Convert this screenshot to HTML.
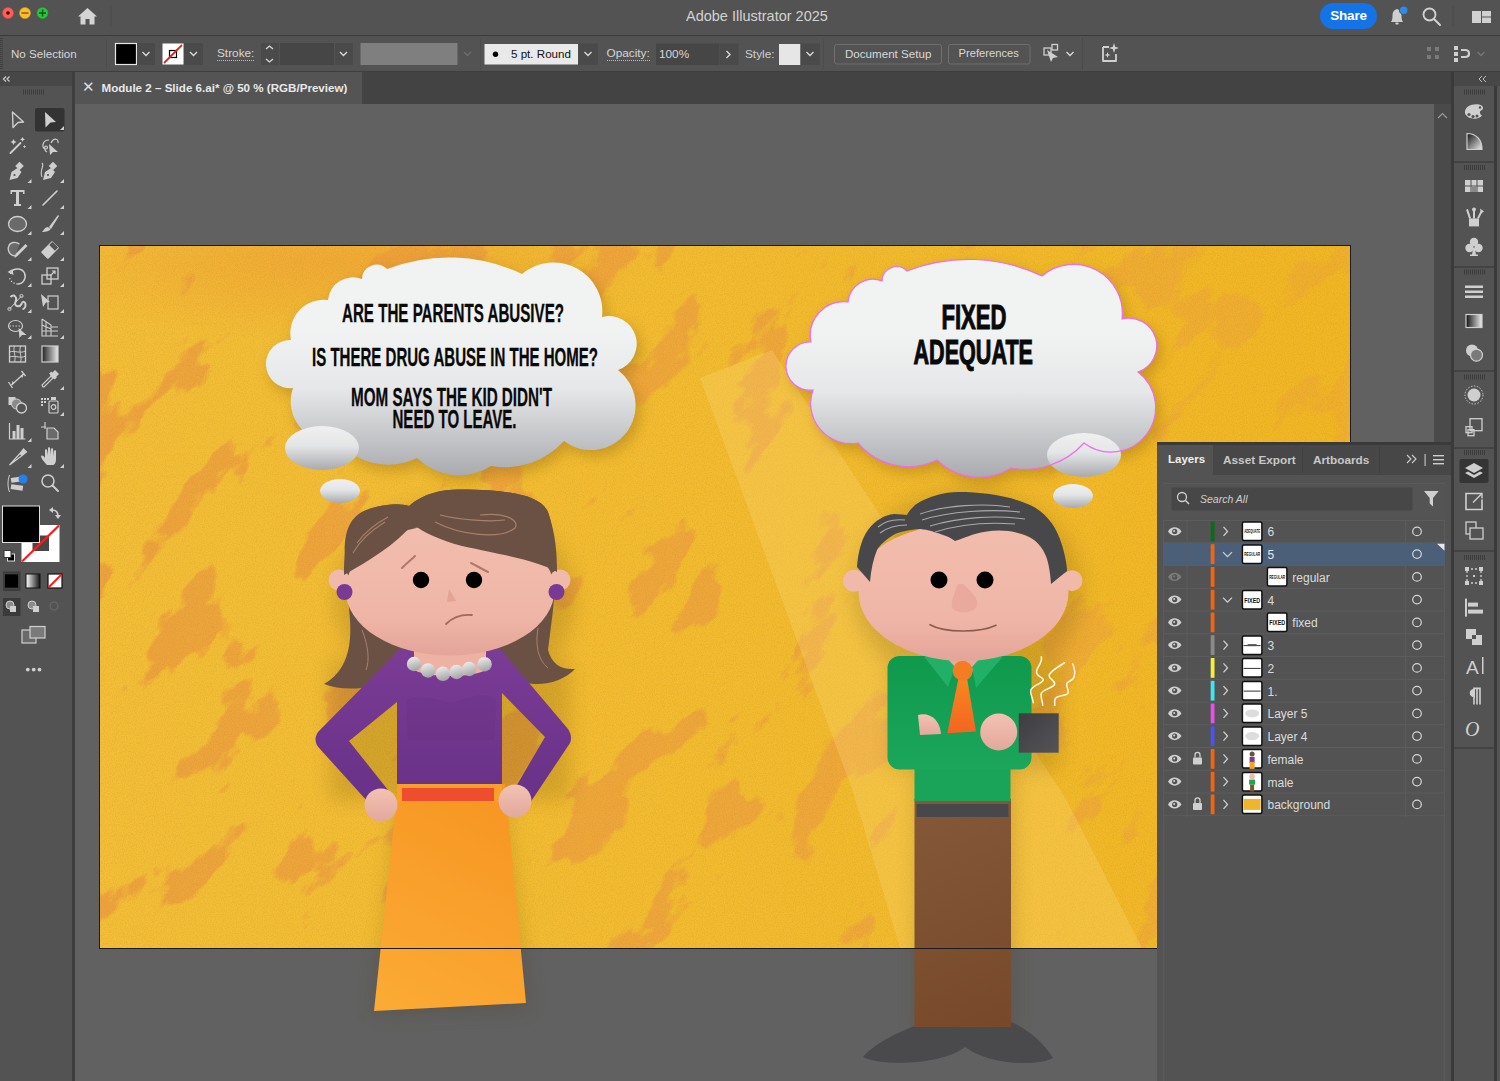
<!DOCTYPE html>
<html><head><meta charset="utf-8">
<style>
*{margin:0;padding:0;box-sizing:border-box}
html,body{width:1500px;height:1081px;overflow:hidden;background:#535353;font-family:"Liberation Sans",sans-serif;color:#d6d6d6}
.a{position:absolute}
#title{left:0;top:0;width:1500px;height:35px;background:#535353}
#titleline{left:0;top:35px;width:1500px;height:1px;background:#3b3b3b}
#ctrl{left:0;top:36px;width:1500px;height:36px;background:#535353}
#ctrlline{left:0;top:71px;width:1500px;height:1px;background:#3e3e3e}
#canvas{left:74px;top:104px;width:1360px;height:977px;background:#616161;overflow:hidden}
#tabbar{left:74px;top:72px;width:1377px;height:32px;background:#434343}
#lefttb{left:0;top:72px;width:72px;height:1009px;background:#535353}
#leftsep{left:72px;top:72px;width:2px;height:1009px;background:#3e3e3e}

</style></head><body>
<div class="a" id="title"></div>
<div class="a" id="titleline"></div>
<div class="a" id="ctrl"></div>
<div class="a" id="ctrlline"></div>
<div class="a" id="tabbar"></div>
<div class="a" id="canvas"></div>
<svg class="a" style="left:0;top:0" width="1500" height="1081" viewBox="0 0 1500 1081">
<defs>
  <clipPath id="cv"><rect x="74" y="104" width="1360" height="977"/></clipPath>
  <clipPath id="ab"><rect x="100" y="246" width="1250" height="702"/></clipPath>
  <linearGradient id="cloudg" gradientUnits="userSpaceOnUse" x1="0" y1="330" x2="0" y2="478">
    <stop offset="0" stop-color="#f1f2f2"/>
    <stop offset="0.4" stop-color="#e6e7e8"/>
    <stop offset="1" stop-color="#a8a9ad"/>
  </linearGradient>
  <linearGradient id="bubg" x1="0" y1="0" x2="0" y2="1">
    <stop offset="0" stop-color="#f0f0f0"/>
    <stop offset="0.45" stop-color="#e4e5e6"/>
    <stop offset="1" stop-color="#a9aaae"/>
  </linearGradient>
  <linearGradient id="faceg" x1="0" y1="0" x2="0" y2="1">
    <stop offset="0" stop-color="#f2bdae"/>
    <stop offset="0.7" stop-color="#efb6a7"/>
    <stop offset="1" stop-color="#e4a499"/>
  </linearGradient>
  <linearGradient id="handg" x1="0" y1="0" x2="0" y2="1">
    <stop offset="0" stop-color="#f3c2b3"/>
    <stop offset="1" stop-color="#e2a89c"/>
  </linearGradient>
  <linearGradient id="sweatg" gradientUnits="userSpaceOnUse" x1="0" y1="650" x2="0" y2="785">
    <stop offset="0" stop-color="#7b3c96"/>
    <stop offset="1" stop-color="#6a3288"/>
  </linearGradient>
  <linearGradient id="skirtg" gradientUnits="userSpaceOnUse" x1="500" y1="785" x2="380" y2="1010">
    <stop offset="0" stop-color="#f79522"/>
    <stop offset="1" stop-color="#fbab35"/>
  </linearGradient>
  <linearGradient id="pantg" gradientUnits="userSpaceOnUse" x1="915" y1="800" x2="1010" y2="1027">
    <stop offset="0" stop-color="#85583a"/>
    <stop offset="1" stop-color="#77492a"/>
  </linearGradient>
  <linearGradient id="shirtg" x1="0" y1="0" x2="0" y2="1">
    <stop offset="0" stop-color="#0e994d"/>
    <stop offset="1" stop-color="#1ba65c"/>
  </linearGradient>
  <linearGradient id="pearlg" x1="0" y1="0" x2="0.3" y2="1">
    <stop offset="0" stop-color="#f4f4f4"/>
    <stop offset="1" stop-color="#a8a8aa"/>
  </linearGradient>
  <filter id="blot" x="0" y="0" width="100%" height="100%" color-interpolation-filters="sRGB">
    <feTurbulence type="fractalNoise" baseFrequency="0.018 0.009" numOctaves="5" seed="9" result="n"/>
    <feColorMatrix in="n" type="matrix" values="0 0 0 0 0.93  0 0 0 0 0.64  0 0 0 0 0.24  -18 0 0 0 7.1" result="c"/>
  </filter>
  <linearGradient id="lmg" gradientUnits="userSpaceOnUse" x1="100" y1="0" x2="1350" y2="0">
    <stop offset="0" stop-color="#fff" stop-opacity="1"/><stop offset="0.55" stop-color="#fff" stop-opacity="0.85"/><stop offset="1" stop-color="#fff" stop-opacity="0.35"/>
  </linearGradient>
  <mask id="lmask" maskUnits="userSpaceOnUse" x="100" y="246" width="1250" height="702"><rect x="100" y="246" width="1250" height="702" fill="url(#lmg)"/></mask>
  <radialGradient id="tl" gradientUnits="userSpaceOnUse" cx="330" cy="262" r="320" gradientTransform="translate(0 196.5) scale(1 0.25)">
    <stop offset="0" stop-color="#ee9a35" stop-opacity="0.55"/><stop offset="1" stop-color="#ee9a35" stop-opacity="0"/>
  </radialGradient>
  <linearGradient id="tieg" x1="0" y1="0" x2="0" y2="1"><stop offset="0" stop-color="#f7881f"/><stop offset="1" stop-color="#f26522"/></linearGradient>
  <linearGradient id="cupg" x1="0" y1="0" x2="1" y2="1"><stop offset="0" stop-color="#3e3e41"/><stop offset="1" stop-color="#545458"/></linearGradient>
  <filter id="grain" x="0" y="0" width="100%" height="100%" color-interpolation-filters="sRGB">
    <feTurbulence type="fractalNoise" baseFrequency="0.9" numOctaves="2" seed="3" result="g"/>
    <feColorMatrix in="g" type="matrix" values="0 0 0 0 0.6  0 0 0 0 0.45  0 0 0 0 0.05  -4 0 0 0 2.3"/>
  </filter>
  <linearGradient id="basey" gradientUnits="userSpaceOnUse" x1="100" y1="0" x2="1350" y2="0">
    <stop offset="0" stop-color="#f3be38"/><stop offset="0.5" stop-color="#f2bb30"/><stop offset="1" stop-color="#f1b624"/>
  </linearGradient>
  <filter id="soft" x="-20%" y="-20%" width="140%" height="140%"><feGaussianBlur stdDeviation="7"/></filter>
  <filter id="soft2" x="-30%" y="-10%" width="160%" height="120%"><feGaussianBlur stdDeviation="10"/></filter>
</defs>
<g clip-path="url(#cv)">
  <rect x="99" y="245" width="1252" height="704" fill="#1c1c28"/>
  <g clip-path="url(#ab)">
    <rect x="100" y="246" width="1250" height="702" fill="url(#basey)"/>
    <g mask="url(#lmask)">
      <g transform="rotate(38 700 600)">
        <rect x="-100" y="-200" width="1600" height="1600" filter="url(#blot)"/>
      </g>
    </g>
    <rect x="100" y="246" width="1250" height="702" fill="url(#tl)"/>
    <rect x="100" y="246" width="1250" height="702" filter="url(#grain)" opacity="0.09"/>
    <path d="M700 378 L772 350 L1066 799 L1142 948 L900 948 L853 792 Z" fill="#ffe189" opacity="0.24"/>
    <path d="M291.0 340.0 A33.5 33.5 0 0 1 328.0 300.0 A25.0 25.0 0 0 1 362.0 279.0 A14.6 14.6 0 0 1 387.0 269.0 A169.9 169.9 0 0 1 522.0 274.0 A48.8 48.8 0 0 1 602.0 317.0 A27.7 27.7 0 0 1 618.0 370.0 A44.6 44.6 0 0 1 564.0 441.0 A79.4 79.4 0 0 1 491.0 466.0 A59.8 59.8 0 0 1 417.0 458.0 A65.3 65.3 0 0 1 338.0 441.0 A40.2 40.2 0 0 1 293.0 388.0 A24.1 24.1 0 1 1 291.0 340.0Z" fill="#7a5a10" opacity="0.35" filter="url(#soft)" transform="translate(4,6)"/>
    <path d="M291.0 340.0 A33.5 33.5 0 0 1 328.0 300.0 A25.0 25.0 0 0 1 362.0 279.0 A14.6 14.6 0 0 1 387.0 269.0 A169.9 169.9 0 0 1 522.0 274.0 A48.8 48.8 0 0 1 602.0 317.0 A27.7 27.7 0 0 1 618.0 370.0 A44.6 44.6 0 0 1 564.0 441.0 A79.4 79.4 0 0 1 491.0 466.0 A59.8 59.8 0 0 1 417.0 458.0 A65.3 65.3 0 0 1 338.0 441.0 A40.2 40.2 0 0 1 293.0 388.0 A24.1 24.1 0 1 1 291.0 340.0Z" fill="#7a5a10" opacity="0.35" filter="url(#soft)" transform="translate(524,8)"/>
  </g>
  <!-- character shadows -->
  <g opacity="0.16" filter="url(#soft2)" fill="#3a2a00">
    <ellipse cx="455" cy="600" rx="120" ry="100"/>
    <rect x="330" y="660" width="240" height="140"/>
    <path d="M398 790 L505 790 L530 1010 L372 1015Z"/>
    <ellipse cx="968" cy="590" rx="115" ry="100"/>
    <rect x="890" y="660" width="170" height="110"/>
    <rect x="915" y="770" width="100" height="260"/>
  </g>

  <!-- clouds -->
  <path d="M291.0 340.0 A33.5 33.5 0 0 1 328.0 300.0 A25.0 25.0 0 0 1 362.0 279.0 A14.6 14.6 0 0 1 387.0 269.0 A169.9 169.9 0 0 1 522.0 274.0 A48.8 48.8 0 0 1 602.0 317.0 A27.7 27.7 0 0 1 618.0 370.0 A44.6 44.6 0 0 1 564.0 441.0 A79.4 79.4 0 0 1 491.0 466.0 A59.8 59.8 0 0 1 417.0 458.0 A65.3 65.3 0 0 1 338.0 441.0 A40.2 40.2 0 0 1 293.0 388.0 A24.1 24.1 0 1 1 291.0 340.0Z" fill="url(#cloudg)"/>
  <ellipse cx="322" cy="448" rx="37" ry="22" fill="url(#bubg)"/>
  <ellipse cx="340" cy="491" rx="20" ry="12" fill="url(#bubg)"/>
  <path d="M291.0 340.0 A33.5 33.5 0 0 1 328.0 300.0 A25.0 25.0 0 0 1 362.0 279.0 A14.6 14.6 0 0 1 387.0 269.0 A169.9 169.9 0 0 1 522.0 274.0 A48.8 48.8 0 0 1 602.0 317.0 A27.7 27.7 0 0 1 618.0 370.0 A44.6 44.6 0 0 1 564.0 441.0 A79.4 79.4 0 0 1 491.0 466.0 A59.8 59.8 0 0 1 417.0 458.0 A65.3 65.3 0 0 1 338.0 441.0 A40.2 40.2 0 0 1 293.0 388.0 A24.1 24.1 0 1 1 291.0 340.0Z" fill="url(#cloudg)" transform="translate(520,2)"/>
  <ellipse cx="1084" cy="455" rx="37" ry="22" fill="url(#bubg)"/>
  <ellipse cx="1073" cy="496" rx="20" ry="12" fill="url(#bubg)"/>

  <!-- ===== WOMAN ===== -->
  <!-- back hair -->
  <path d="M324 684 C345 672 352 650 350 620 L345 560 C343 530 350 512 376 507 C392 503 402 504 409 506 C425 492 445 489 462 489.5 C510 490 540 495 548 512 C556 535 557 570 553 610 L548 650 C552 665 562 670 575 669 C560 685 530 690 505 675 L395 675 C375 690 345 692 324 684Z" fill="#6b5143"/>
  <!-- arms -->
  <path d="M397 652 L318 732 C314 738 315 744 320 749 L368 802 L388 790 L349 741 L397 702Z" fill="url(#sweatg)"/>
  <path d="M502 651 L568 729 C572 735 572 741 568 746 L530 803 L514 790 L545 737 L502 693Z" fill="url(#sweatg)"/>
  <!-- torso -->
  <rect x="397" y="650" width="105" height="135" fill="url(#sweatg)"/>
  <path d="M406 700 C425 692 445 705 455 702 C470 697 485 690 496 700 L494 740 L408 740Z" fill="#5f2d7c" opacity="0.18"/>
  <!-- skirt -->
  <path d="M398 784 L505 784 L526 1003 L374 1011Z" fill="url(#skirtg)"/>
  <rect x="397" y="784" width="105" height="18" fill="#f7a02a"/>
  <rect x="402" y="788" width="92" height="13" fill="#ee4d2e"/>
  <!-- hands -->
  <circle cx="381" cy="805" r="16.5" fill="url(#handg)"/>
  <circle cx="515" cy="801" r="16.5" fill="url(#handg)"/>
  <!-- neck -->
  <path d="M414 645 L486 645 L486 670 C470 678 430 678 414 670Z" fill="#eeb2a3"/>
  <!-- ears -->
  <circle cx="339" cy="580" r="10.5" fill="#f0b9aa"/>
  <circle cx="560" cy="580" r="10.5" fill="#f0b9aa"/>
  <!-- face -->
  <ellipse cx="450" cy="590" rx="104.5" ry="65.5" fill="url(#faceg)"/>
  <!-- bangs -->
  <path d="M344 575 C344 540 350 515 376 507 C392 503 402 504 409 506 C425 492 445 489 462 489.5 C510 490 540 495 548 512 C556 535 557 555 557 572 C540 562 510 556 462 546 C440 540 422 532 413 524 C395 545 370 560 344 575Z" fill="#6b5143"/>
  <path d="M435 522 C460 535 500 540 515 528 C520 520 505 512 480 515 M440 515 C460 520 490 522 505 520" stroke="#a8806a" stroke-width="1.2" fill="none"/>
  <path d="M353 553 C360 540 372 530 385 522 M357 543 C365 532 375 524 388 517" stroke="#a8806a" stroke-width="1.1" fill="none"/>
  <path d="M362 630 C368 645 370 660 366 670 M538 628 C535 645 538 660 548 668" stroke="#a8806a" stroke-width="1" fill="none"/>
  <!-- earrings -->
  <circle cx="344.5" cy="592" r="8" fill="#7a3a93"/>
  <circle cx="556.5" cy="592" r="8" fill="#7a3a93"/>
  <!-- eyes -->
  <circle cx="421" cy="580" r="8.2" fill="#000"/>
  <circle cx="474" cy="580" r="8.2" fill="#000"/>
  <path d="M402 568 C407 563 411 560 415 556" stroke="#b07868" stroke-width="2" fill="none" stroke-linecap="round"/>
  <path d="M471 563 C477 566 482 569 488 572" stroke="#b07868" stroke-width="2" fill="none" stroke-linecap="round"/>
  <path d="M449 589 L456 601 L447 602Z" fill="#e4a395"/>
  <path d="M446 624 C452 618 460 614 472 615" stroke="#a06a5e" stroke-width="1.8" fill="none" stroke-linecap="round"/>
  <!-- pearls -->
  <g fill="url(#pearlg)">
    <circle cx="414" cy="664" r="7.2"/><circle cx="428" cy="670.5" r="7.2"/><circle cx="443" cy="673.8" r="7.2"/>
    <circle cx="456.6" cy="672" r="7.2"/><circle cx="469.2" cy="669" r="7.2"/><circle cx="484.6" cy="664.2" r="7.2"/>
  </g>

  <!-- ===== MAN ===== -->
  <!-- feet -->
  <path d="M915 1026 C890 1035 870 1048 863 1057 C880 1066 940 1066 965 1047 C990 1066 1040 1066 1053 1058 C1045 1045 1030 1030 1011 1022Z" fill="#4a4a4c"/>
  <!-- pants -->
  <rect x="914.5" y="799" width="96.5" height="228" fill="url(#pantg)"/>
  <rect x="916.5" y="804" width="92" height="13" fill="#48484b"/>
  <!-- lower shirt -->
  <rect x="914.5" y="765" width="96" height="36" fill="#19a45a"/>
  <!-- shirt -->
  <rect x="887.5" y="656" width="144" height="113.5" rx="12" fill="url(#shirtg)"/>
  <path d="M942 652 L986 652 L972 672 L963 668 L954 672Z" fill="#e8a99c"/>
  <path d="M924 656.5 L945 656 L955 667 L948 687Z" fill="#22b066"/>
  <path d="M1003 656.5 L982 656 L972 667 L976 688Z" fill="#22b066"/>
  <!-- tie -->
  <path d="M958.5 678 L967 678 L976 731.5 L947.3 733.3Z" fill="url(#tieg)"/>
  <circle cx="962.7" cy="670.7" r="10" fill="#f47d24"/>
  <!-- arm lines -->
  <!-- hands -->
  <path d="M918 715 C930 712 940 720 941 734 L920 735Z" fill="url(#handg)"/>
  <circle cx="998.7" cy="732" r="18.5" fill="url(#handg)"/>
  <!-- cup -->
  <rect x="1018.7" y="713.3" width="40" height="39.4" fill="url(#cupg)"/>
  <g stroke="#fff8e6" stroke-width="1.5" fill="none" stroke-linejoin="round" stroke-linecap="round">
    <path d="M1041.3 656.7 C1043 664 1035 668 1036.7 673.3 C1038 677 1044 678 1043.3 680 C1042 684 1031 686 1030.7 690.7 C1030.5 695 1033 699 1033.3 702.7"/>
    <path d="M1064.7 662.7 C1058 667 1052 670 1049.3 674.7 C1048 679 1055 680 1054.7 684 C1054 688 1043 689 1041.3 693.3 C1040 697 1043 702 1042.7 705.3"/>
    <path d="M1072.7 664 C1075 669 1075 674 1074 677.3 C1073 681 1067 681 1066.7 684 C1066.5 688 1069 690 1068 693.3 C1067 696 1057 695 1055.3 698.7 C1054 701 1055 703 1054.7 705.3"/>
  </g>
  <!-- ears -->
  <circle cx="854" cy="580.7" r="11" fill="#f0b9aa"/>
  <circle cx="1072" cy="580.7" r="10.5" fill="#f0b9aa"/>
  <!-- face -->
  <ellipse cx="963" cy="570" rx="96" ry="45" fill="#f2bdae"/>
  <ellipse cx="963.5" cy="592" rx="105" ry="69" fill="url(#faceg)"/>
  <!-- hair -->
  <path d="M857 567 C858 552 862 538 868 530 C875 520 885 515 894 514 C900 514 904 515 907 515 C909 511 912 508 915 505 C928 496 945 492 958 492 C985 492 1010 496 1030 505 C1045 512 1056 525 1062 545 C1065 555 1067 565 1067 571 L1051 584 C1050 570 1048 560 1045 554 C1040 543 1032 537 1022 534 C1005 529 990 530 975 534 C966 537 958 540 955 541 C951 538 947 536 943 535 C932 531 925 529 918 529 C908 530 900 532 895 534 C885 540 880 545 877 550 C873 560 871 570 870 582Z" fill="#48484b"/>
  <path d="M920 514 C945 505 985 503 1010 507 M922 520 C950 511 990 509 1020 512 M930 526 C960 517 995 515 1025 519 M935 532 C960 524 990 522 1015 524 M878 527 C885 521 895 519 905 520 M880 533 C888 527 897 525 907 525" stroke="#a9a9ab" stroke-width="1.1" fill="none"/>
  <!-- eyes -->
  <circle cx="939" cy="580" r="8.5" fill="#000"/>
  <circle cx="985" cy="580" r="8.5" fill="#000"/>
  <path d="M958 584 C953 596 949 606 954 610 C960 614 974 613 977 606 C979 599 972 592 963 584Z" fill="#e9aa9d"/>
  <path d="M930 624.7 C945 633 980 633 996 625.3" stroke="#8a5c50" stroke-width="1.6" fill="none" stroke-linecap="round"/>

  <!-- artboard edge over art -->
  <line x1="99" y1="948.5" x2="1351" y2="948.5" stroke="#1c1c20" stroke-width="1.2"/>
  <path d="M291.0 340.0 A33.5 33.5 0 0 1 328.0 300.0 A25.0 25.0 0 0 1 362.0 279.0 A14.6 14.6 0 0 1 387.0 269.0 A169.9 169.9 0 0 1 522.0 274.0 A48.8 48.8 0 0 1 602.0 317.0 A27.7 27.7 0 0 1 618.0 370.0 A44.6 44.6 0 0 1 564.0 441.0 A79.4 79.4 0 0 1 491.0 466.0 A59.8 59.8 0 0 1 417.0 458.0 A65.3 65.3 0 0 1 338.0 441.0 A40.2 40.2 0 0 1 293.0 388.0 A24.1 24.1 0 1 1 291.0 340.0Z" fill="none" stroke="#ee6cf0" stroke-width="1.2" transform="translate(520,2)"/>
</g>
</svg>

<svg class="a" style="left:0;top:0" width="1500" height="1081" viewBox="0 0 1500 1081">
<g font-family="Liberation Sans" font-weight="bold" fill="#0a0a0a" stroke="#0a0a0a" stroke-width="0.3">
  <text x="342" y="322" font-size="25" textLength="222" lengthAdjust="spacingAndGlyphs">ARE THE PARENTS ABUSIVE?</text>
  <text x="312" y="365.5" font-size="25" textLength="286" lengthAdjust="spacingAndGlyphs">IS THERE DRUG ABUSE IN THE HOME?</text>
  <text x="351" y="405.5" font-size="25" textLength="201" lengthAdjust="spacingAndGlyphs">MOM SAYS THE KID DIDN'T</text>
  <text x="392.5" y="427.5" font-size="25" textLength="124" lengthAdjust="spacingAndGlyphs">NEED TO LEAVE.</text>
  <text x="941.5" y="329.3" font-size="35" textLength="65" lengthAdjust="spacingAndGlyphs" stroke="#0a0a0a" stroke-width="1.1">FIXED</text>
  <text x="913.5" y="363.5" font-size="35" textLength="119.5" lengthAdjust="spacingAndGlyphs" stroke="#0a0a0a" stroke-width="1.1">ADEQUATE</text>
</g>
</svg>

<!-- title bar content -->
<svg class="a" style="left:0;top:0" width="120" height="35" viewBox="0 0 120 35">
  <circle cx="8" cy="13" r="5.5" fill="#fd6058" stroke="#e0443e" stroke-width="0.5"/><circle cx="8" cy="13" r="1.8" fill="#4d0000"/>
  <circle cx="25" cy="13" r="5.5" fill="#fdbc2e" stroke="#dea123" stroke-width="0.5"/><rect x="21.5" y="12.3" width="7" height="1.5" fill="#985712"/>
  <circle cx="42.5" cy="13" r="5.5" fill="#27c840" stroke="#1aab29" stroke-width="0.5"/><rect x="39" y="12.3" width="7" height="1.5" fill="#0b5a0f"/><rect x="41.8" y="9.5" width="1.5" height="7" fill="#0b5a0f"/>
  <path d="M87.5 8 L97 16.5 L94.5 16.5 L94.5 24.5 L89.5 24.5 L89.5 19 L85.5 19 L85.5 24.5 L80.5 24.5 L80.5 16.5 L78 16.5 Z" fill="#d4d4d4"/>
  <rect x="110.5" y="6" width="1" height="20" fill="#4a4a4a"/>
</svg>
<div class="a" style="left:686px;top:8px;font-size:14.5px;color:#d2d2d2;white-space:nowrap">Adobe Illustrator 2025</div>
<div class="a" style="left:1320px;top:3px;width:57px;height:26px;border-radius:13px;background:#1473e6;color:#fff;font-weight:bold;font-size:13.5px;line-height:26px;text-align:center;letter-spacing:-0.2px">Share</div>
<svg class="a" style="left:1385px;top:2px" width="115" height="30" viewBox="1385 2 115 30">
  <path d="M1391 22 L1391.8 20.5 C1392.5 19 1392.5 17 1392.5 15 C1392.5 11.5 1394.5 9.5 1397 9 C1399.5 9.5 1401.5 11.5 1401.5 15 C1401.5 17 1401.5 19 1402.2 20.5 L1403 22 Z" fill="#cfcfcf"/>
  <rect x="1395.3" y="22.6" width="3.4" height="2" rx="1" fill="#cfcfcf"/>
  <circle cx="1403.7" cy="10.3" r="4.3" fill="#2d8ceb" stroke="#535353" stroke-width="1"/>
  <circle cx="1429.5" cy="14.5" r="6" fill="none" stroke="#d2d2d2" stroke-width="1.8"/>
  <line x1="1434" y1="19" x2="1440" y2="25" stroke="#d2d2d2" stroke-width="2" stroke-linecap="round"/>
  <rect x="1452.5" y="6" width="1" height="20" fill="#4a4a4a"/>
  <rect x="1472" y="11" width="9" height="12" fill="#d0d0d0"/>
  <rect x="1482" y="11" width="9" height="5.5" fill="#d0d0d0"/>
  <rect x="1482" y="17.5" width="9" height="5.5" fill="#d0d0d0"/>
</svg>

<!-- control bar -->
<div class="a" style="left:0;top:38px;width:3px;height:32px;background:repeating-linear-gradient(#3f3f3f 0 1px,transparent 1px 2px)"></div>
<div class="a" style="left:11px;top:47px;font-size:11.6px;color:#d6d6d6;white-space:nowrap">No Selection</div>
<svg class="a" style="left:100px;top:36px" width="1400" height="36" viewBox="100 36 1400 36">
  <rect x="106" y="39" width="1" height="30" fill="#4c4c4c"/>
  <rect x="115.5" y="43.5" width="21" height="21" fill="#000" stroke="#e6e6e6" stroke-width="1.2"/>
  <rect x="137" y="43" width="18" height="22" fill="#4a4a4a"/>
  <path d="M142.5 52 L146 55.5 L149.5 52" stroke="#d8d8d8" stroke-width="1.4" fill="none"/>
  <rect x="162.5" y="43.5" width="21" height="21" fill="#fff"/>
  <rect x="169.5" y="50.5" width="7" height="7" fill="none" stroke="#000" stroke-width="1.2"/>
  <line x1="164" y1="63" x2="182" y2="45" stroke="#e3221a" stroke-width="1.8"/>
  <rect x="184" y="43" width="19" height="22" fill="#4a4a4a"/>
  <path d="M190 52 L193.5 55.5 L197 52" stroke="#d8d8d8" stroke-width="1.4" fill="none"/>
  <rect x="261" y="43" width="18" height="22" fill="#4a4a4a"/>
  <path d="M266 49 L269.5 46 L273 49 M266 59 L269.5 62 L273 59" stroke="#d8d8d8" stroke-width="1.3" fill="none"/>
  <rect x="280" y="43" width="54" height="22" fill="#464646"/>
  <rect x="335" y="43" width="18" height="22" fill="#4a4a4a"/>
  <path d="M340 52 L343.5 55.5 L347 52" stroke="#d8d8d8" stroke-width="1.4" fill="none"/>
  <rect x="360.5" y="43" width="97" height="22" fill="#7f7f7f"/>
  <rect x="458" y="43" width="18" height="22" fill="#535353"/>
  <path d="M464 52 L467.5 55.5 L471 52" stroke="#6e6e6e" stroke-width="1.3" fill="none"/>
  <rect x="480" y="39" width="1" height="30" fill="#4c4c4c"/>
  <rect x="484.5" y="44" width="93.5" height="20.5" fill="#e9e9e9"/>
  <circle cx="495.5" cy="54.3" r="2.7" fill="#000"/>
  <rect x="578.5" y="43.5" width="19.5" height="21.5" fill="#4a4a4a"/>
  <path d="M584.5 52 L588 55.5 L591.5 52" stroke="#d8d8d8" stroke-width="1.4" fill="none"/>
  <rect x="656" y="43.5" width="63" height="21.5" fill="#464646"/>
  <rect x="719.5" y="43.5" width="19" height="21.5" fill="#4a4a4a"/>
  <path d="M726.5 51 L730 54.5 L726.5 58" stroke="#d8d8d8" stroke-width="1.4" fill="none"/>
  <rect x="779" y="44" width="21.5" height="21" fill="#e6e6e6"/>
  <rect x="800.5" y="43.5" width="19.5" height="21.5" fill="#4a4a4a"/>
  <path d="M806.5 52 L810 55.5 L813.5 52" stroke="#d8d8d8" stroke-width="1.4" fill="none"/>
  <rect x="823" y="39" width="1" height="30" fill="#4c4c4c"/>
  <rect x="834.5" y="44.5" width="107" height="19.5" rx="2" fill="none" stroke="#6f6f6f" stroke-width="1"/>
  <rect x="948.5" y="44.5" width="81.5" height="19.5" rx="2" fill="none" stroke="#6f6f6f" stroke-width="1"/>
  <g fill="none" stroke="#cfcfcf" stroke-width="1.3">
    <rect x="1044" y="48" width="7" height="7"/><rect x="1052" y="44.5" width="5.5" height="5.5"/>
  </g>
  <path d="M1047 50 L1058 57 L1053 58 L1051 62 Z" fill="#cfcfcf"/>
  <path d="M1066.5 52 L1070 55.5 L1073.5 52" stroke="#d8d8d8" stroke-width="1.4" fill="none"/>
  <rect x="1082" y="38" width="1" height="32" fill="#4a4a4a"/>
  <path d="M1103 47 L1103 61 L1116 61 L1116 54 M1109 47 L1103 47" stroke="#d0d0d0" stroke-width="1.8" fill="none" stroke-linejoin="round"/>
  <path d="M1114 43 L1115.2 46.8 L1119 48 L1115.2 49.2 L1114 53 L1112.8 49.2 L1109 48 L1112.8 46.8Z" fill="#d0d0d0"/>
  <path d="M1107.5 52 L1108.3 54.2 L1110.5 55 L1108.3 55.8 L1107.5 58 L1106.7 55.8 L1104.5 55 L1106.7 54.2Z" fill="#d0d0d0"/>
  <g fill="#7a7a7a"><rect x="1427" y="47" width="4" height="4"/><rect x="1435" y="47" width="4" height="4"/><rect x="1427" y="55" width="4" height="4"/><rect x="1435" y="55" width="4" height="4"/></g>
  <g fill="#d0d0d0"><rect x="1454" y="46" width="4" height="4"/><rect x="1454" y="52" width="4" height="4"/><rect x="1454" y="58" width="4" height="4"/></g>
  <path d="M1461 50 L1465 50 C1468 50 1469 52 1469 53.5 C1469 55 1468 57 1465 57 L1461 57" stroke="#d0d0d0" stroke-width="2.2" fill="none"/>
  <path d="M1477.5 52 L1481 55.5 L1484.5 52" stroke="#777" stroke-width="1.3" fill="none"/>
</svg>
<div class="a" style="left:217px;top:47px;font-size:11.8px;color:#d6d6d6;white-space:nowrap;border-bottom:1px dotted #bbb;line-height:13px">Stroke:</div>
<div class="a" style="left:511px;top:47px;font-size:11.6px;color:#111;white-space:nowrap">5 pt. Round</div>
<div class="a" style="left:606.5px;top:47px;font-size:11.8px;color:#d6d6d6;white-space:nowrap;border-bottom:1px dotted #bbb;line-height:13px">Opacity:</div>
<div class="a" style="left:659px;top:47px;font-size:11.8px;color:#d6d6d6;white-space:nowrap">100%</div>
<div class="a" style="left:745px;top:47px;font-size:11.8px;color:#cfcfcf;white-space:nowrap">Style:</div>
<div class="a" style="left:845px;top:47px;font-size:11.6px;color:#d8d8d8;white-space:nowrap">Document Setup</div>
<div class="a" style="left:958.5px;top:47px;font-size:11.2px;color:#d8d8d8;white-space:nowrap">Preferences</div>

<!-- tab -->
<div class="a" style="left:74px;top:72px;width:288px;height:32px;background:#545454"></div>
<div class="a" style="left:82px;top:78px;font-size:15px;color:#dcdcdc">&#x2715;</div>
<div class="a" style="left:101.5px;top:81px;font-size:11.6px;font-weight:bold;color:#e8e8e8;white-space:nowrap">Module 2 – Slide 6.ai* @ 50 % (RGB/Preview)</div>

<div class="a" id="lefttb"></div>
<div class="a" id="leftsep"></div>
<div class="a" style="left:0;top:72px;width:72px;height:14px;background:#474747"></div>
<div class="a" style="left:72px;top:72px;width:3px;height:1009px;background:#3e3e3e"></div>
<svg class="a" style="left:0;top:0" width="74" height="700" viewBox="0 0 74 700">
<defs><linearGradient id="tg2"><stop offset="0" stop-color="#fff"/><stop offset="1" stop-color="#111"/></linearGradient></defs>
<path d="M6 76.5 L3.5 79 L6 81.5 M9.5 76.5 L7 79 L9.5 81.5" stroke="#c8c8c8" stroke-width="1.3" fill="none"/>
<g fill="#3c3c3c"><rect x="23" y="89.5" width="1" height="5"/><rect x="25" y="89.5" width="1" height="5"/><rect x="27" y="89.5" width="1" height="5"/><rect x="29" y="89.5" width="1" height="5"/><rect x="31" y="89.5" width="1" height="5"/><rect x="33" y="89.5" width="1" height="5"/><rect x="35" y="89.5" width="1" height="5"/><rect x="37" y="89.5" width="1" height="5"/><rect x="39" y="89.5" width="1" height="5"/><rect x="41" y="89.5" width="1" height="5"/><rect x="43" y="89.5" width="1" height="5"/></g>
<rect x="35" y="108" width="29.5" height="23.5" rx="2" fill="#333"/><g transform="translate(17.5 120.0)"><path d="M-5 -8 L6 2 L0.5 2.5 L-4.5 7.5 Z" fill="none" stroke="#cfcfcf" stroke-width="1.4" stroke-linejoin="round"/></g><g transform="translate(50.0 120.0)"><path d="M-5 -8 L6 2 L0.5 2.5 L-4.5 7.5 Z" fill="#cfcfcf"/></g><path d="M64.0 126.0 L64.0 130.0 L60.0 130.0 Z" fill="#cfcfcf"/><g transform="translate(17.5 146.0)"><line x1="-7" y1="7" x2="3" y2="-3" stroke="#cfcfcf" stroke-width="1.8" stroke-linecap="round"/><path d="M-4 -7 l1 2 2 1 -2 1 -1 2 -1 -2 -2 -1 2 -1z M5 -9 l0.8 1.6 1.6 0.8 -1.6 0.8 -0.8 1.6 -0.8 -1.6 -1.6 -0.8 1.6 -0.8z M7 -1 l0.6 1 1 0.6 -1 0.6 -0.6 1 -0.6 -1 -1 -0.6 1 -0.6z" fill="#cfcfcf"/></g><g transform="translate(50.0 146.0)"><path d="M-1 -6 C-8 -6 -9 3 -4 3 C-2 3 -2 0 -4 0 C-6 0 -6 5 -3 6" fill="none" stroke="#cfcfcf" stroke-width="1.2"/><path d="M1 -3 C4 -9 9 -7 8 -3" fill="none" stroke="#cfcfcf" stroke-width="1.2"/><path d="M-1 -2 L8 6 L3 6 L0 9 Z" fill="#cfcfcf"/></g><g transform="translate(17.5 172.0)"><path d="M-8 8 L-6 0 L0 -4 L4 0 L0 6 Z" fill="#cfcfcf"/><rect x="-1" y="-9" width="6" height="6" transform="rotate(45 2 -6)" fill="#cfcfcf"/><circle cx="-3" cy="3" r="1.1" fill="#535353"/></g><path d="M31.5 179.0 L31.5 183.0 L27.5 183.0 Z" fill="#cfcfcf"/><g transform="translate(51.0 172.0)"><path d="M-8 8 L-6 0 L0 -4 L4 0 L0 6 Z" fill="#cfcfcf"/><rect x="-1" y="-9" width="6" height="6" transform="rotate(45 2 -6)" fill="#cfcfcf"/><circle cx="-3" cy="3" r="1.1" fill="#535353"/><path d="M-9 5 C-12 -2 -6 -6 -9 -9" fill="none" stroke="#cfcfcf" stroke-width="1.1"/></g><path d="M64.0 179.0 L64.0 183.0 L60.0 183.0 Z" fill="#cfcfcf"/><g transform="translate(17.5 198.0)"><path d="M-7 -8 H7 V-4 H5.5 V-6 H1.5 V6 H3.5 V8 H-3.5 V6 H-1.5 V-6 H-5.5 V-4 H-7 Z" fill="#cfcfcf"/></g><path d="M31.5 205.0 L31.5 209.0 L27.5 209.0 Z" fill="#cfcfcf"/><g transform="translate(50.0 198.0)"><line x1="-7" y1="7" x2="7" y2="-7" stroke="#cfcfcf" stroke-width="1.6" stroke-linecap="round"/></g><path d="M64.0 205.0 L64.0 209.0 L60.0 209.0 Z" fill="#cfcfcf"/><g transform="translate(17.5 224.0)"><ellipse cx="0" cy="0" rx="9" ry="7.5" fill="#6a6a6a" stroke="#cfcfcf" stroke-width="1.3"/></g><path d="M31.5 231.0 L31.5 235.0 L27.5 235.0 Z" fill="#cfcfcf"/><g transform="translate(50.0 224.0)"><path d="M8 -9 L-1 3 L1 5 L9 -8 Z" fill="#cfcfcf"/><path d="M-2 3 C-5 3 -6 6 -8 8 C-4 8 0 7 0.5 5 Z" fill="#cfcfcf"/></g><path d="M64.0 231.0 L64.0 235.0 L60.0 235.0 Z" fill="#cfcfcf"/><g transform="translate(17.5 250.0)"><path d="M-2 6 C-8 6 -10 0 -9 -3 C-8 -8 -2 -9 2 -6" fill="#6a6a6a" stroke="#cfcfcf" stroke-width="1.3"/><path d="M-3 8 L-2 4 L8 -6 L10 -4 L0 6 Z" fill="#cfcfcf"/></g><path d="M31.5 257.0 L31.5 261.0 L27.5 261.0 Z" fill="#cfcfcf"/><g transform="translate(50.0 250.0)"><g transform="rotate(-45)"><rect x="-8" y="-5" width="16" height="10" rx="1" fill="#cfcfcf"/><rect x="3" y="-4" width="4.5" height="8" fill="#535353"/></g></g><path d="M64.0 257.0 L64.0 261.0 L60.0 261.0 Z" fill="#cfcfcf"/><g transform="translate(17.5 276.0)"><path d="M-7 -2 C-6 -8 4 -9 7 -3 C9 2 6 8 0 8" fill="none" stroke="#cfcfcf" stroke-width="1.5"/><path d="M0 8 C-4 8 -7 5 -8 2" fill="none" stroke="#cfcfcf" stroke-width="1.3" stroke-dasharray="1.2 1.8"/><path d="M-10 -4 L-5 -7 L-4 -1 Z" fill="#cfcfcf"/></g><path d="M31.5 283.0 L31.5 287.0 L27.5 287.0 Z" fill="#cfcfcf"/><g transform="translate(50.0 276.0)"><rect x="-8" y="-1" width="9" height="9" fill="none" stroke="#cfcfcf" stroke-width="1.3"/><rect x="-3" y="-8" width="11" height="11" fill="none" stroke="#cfcfcf" stroke-width="1.3"/><path d="M0 0 L5 -5 M2 -5 H5 V-2" stroke="#cfcfcf" stroke-width="1.2" fill="none"/></g><path d="M64.0 283.0 L64.0 287.0 L60.0 287.0 Z" fill="#cfcfcf"/><g transform="translate(17.5 302.0)"><path d="M-7 -5 C-3 -9 0 -4 -2 0 C-4 4 2 6 4 2 C5 -1 8 -1 8 3 C8 6 6 7 5 7" fill="none" stroke="#cfcfcf" stroke-width="2"/><line x1="-8" y1="7" x2="4" y2="-6" stroke="#cfcfcf" stroke-width="1"/><circle cx="-8" cy="7" r="1.6" fill="none" stroke="#cfcfcf"/><circle cx="4" cy="-6" r="1.6" fill="none" stroke="#cfcfcf"/></g><path d="M31.5 309.0 L31.5 313.0 L27.5 313.0 Z" fill="#cfcfcf"/><g transform="translate(50.0 302.0)"><path d="M-9 -8 L0 0 L-4 0.5 L-7 5 Z" fill="#cfcfcf"/><rect x="-2" y="-6" width="10" height="13" fill="none" stroke="#cfcfcf" stroke-width="1.2"/></g><path d="M64.0 309.0 L64.0 313.0 L60.0 313.0 Z" fill="#cfcfcf"/><g transform="translate(17.5 328.0)"><ellipse cx="-2" cy="-2" rx="7" ry="5.5" fill="none" stroke="#cfcfcf" stroke-width="1.2"/><line x1="-8" y1="-2" x2="4" y2="-2" stroke="#cfcfcf" stroke-dasharray="1.5 1.5"/><path d="M1 0 L9 7 L4.5 7 L2 10 Z" fill="#cfcfcf"/></g><path d="M31.5 335.0 L31.5 339.0 L27.5 339.0 Z" fill="#cfcfcf"/><g transform="translate(50.0 328.0)"><path d="M-8 -9 L-8 8 L8 8 M-8 -9 L1 -3 L1 8 M-8 -3 L1 1 M-8 3 L8 3 M-4 -6 L-4 8 M1 -1 L8 -1" fill="none" stroke="#cfcfcf" stroke-width="1.1"/></g><path d="M64.0 335.0 L64.0 339.0 L60.0 339.0 Z" fill="#cfcfcf"/><g transform="translate(17.5 354.0)"><rect x="-8" y="-8" width="16" height="16" fill="none" stroke="#cfcfcf" stroke-width="1.3"/><path d="M-8 -2 C-3 -4 2 0 8 -3 M-8 3 C-2 1 3 5 8 2 M-3 -8 C-5 -3 -1 2 -3 8 M3 -8 C1 -2 5 3 3 8" fill="none" stroke="#cfcfcf" stroke-width="1"/></g><defs><linearGradient id="tg"><stop offset="0" stop-color="#222"/><stop offset="1" stop-color="#e8e8e8"/></linearGradient></defs><g transform="translate(50.0 354.0)"><rect x="-8" y="-8" width="16" height="16" fill="url(#tg)" stroke="#cfcfcf" stroke-width="1.2"/></g><g transform="translate(17.5 379.0)"><path d="M-9 3 L-5 9 M4 -8 L8 -3 M-6 6 L6 -5" stroke="#cfcfcf" stroke-width="1.3" fill="none"/><path d="M-3 4 L-6 6 L-5 2 Z M3 -3 L6 -5 L5 -1 Z" fill="#cfcfcf"/></g><g transform="translate(50.0 379.0)"><path d="M-7 8 L-8 6 L1 -3 L3 -1 L-6 8 Z" fill="none" stroke="#cfcfcf" stroke-width="1.2"/><path d="M0 -4 L5 -9 L9 -5 L4 0 Z" fill="#cfcfcf"/><rect x="-1" y="-5" width="8" height="3" transform="rotate(45 3 -3.5)" fill="#cfcfcf"/></g><path d="M64.0 386.0 L64.0 390.0 L60.0 390.0 Z" fill="#cfcfcf"/><g transform="translate(17.5 405.0)"><rect x="-9" y="-8" width="7" height="8" fill="#cfcfcf"/><circle cx="-1" cy="-1" r="5" fill="#8a8a8a" stroke="#cfcfcf" stroke-width="1"/><circle cx="4" cy="3" r="5" fill="#535353" stroke="#cfcfcf" stroke-width="1.3"/></g><g transform="translate(50.0 405.0)"><g fill="#cfcfcf"><rect x="-9" y="-7" width="2" height="2"/><rect x="-6" y="-7" width="2" height="2"/><rect x="-3" y="-7" width="2" height="2"/><rect x="-9" y="-4" width="2" height="2"/><rect x="-6" y="-4" width="2" height="2"/><rect x="-9" y="-1" width="2" height="2"/></g><rect x="-1" y="-4" width="9" height="12" rx="1" fill="none" stroke="#cfcfcf" stroke-width="1.2"/><rect x="1" y="-8" width="5" height="3" fill="#cfcfcf"/><circle cx="3.5" cy="2" r="2.3" fill="none" stroke="#cfcfcf" stroke-width="1.2"/></g><path d="M64.0 412.0 L64.0 416.0 L60.0 416.0 Z" fill="#cfcfcf"/><g transform="translate(17.5 431.0)"><path d="M-8 -8 V8 H8" fill="none" stroke="#cfcfcf" stroke-width="1.2"/><rect x="-5" y="0" width="3" height="8" fill="#cfcfcf"/><rect x="-1" y="-6" width="3" height="14" fill="#cfcfcf"/><rect x="3" y="-3" width="3" height="11" fill="#cfcfcf"/></g><path d="M31.5 438.0 L31.5 442.0 L27.5 442.0 Z" fill="#cfcfcf"/><g transform="translate(50.0 431.0)"><path d="M-9 -4 H-4 M-5 -9 V-2" stroke="#cfcfcf" stroke-width="1.1"/><path d="M-3 -3 H4 L8 1 V8 H-3 Z" fill="#6a6a6a" stroke="#cfcfcf" stroke-width="1.2"/></g><g transform="translate(17.5 457.0)"><path d="M-8 8 L2 -3 L6 -8 L9 -5 L4 -1 Z" fill="none" stroke="#cfcfcf" stroke-width="1.2"/><path d="M2 -3 L6 -8 L9 -5 L4 -1 Z" fill="#cfcfcf"/></g><path d="M31.5 464.0 L31.5 468.0 L27.5 468.0 Z" fill="#cfcfcf"/><g transform="translate(50.0 457.0)"><path d="M-3 8 C-6 5 -9 1 -9 -1 C-8 -2 -6 -1 -5 1 L-5 -7 C-5 -8 -3 -8 -3 -7 L-2 -2 L-2 -9 C-2 -10 0 -10 0 -9 L1 -2 L1 -8 C1 -9 3 -9 3 -8 L4 -1 L4 -6 C4 -7 6 -7 6 -6 L6 3 C6 6 4 8 3 8 Z" fill="#cfcfcf"/></g><path d="M64.0 464.0 L64.0 468.0 L60.0 468.0 Z" fill="#cfcfcf"/><g transform="translate(17.5 483.0)"><path d="M-8 -8 C-10 -2 -10 4 -8 9" fill="none" stroke="#cfcfcf" stroke-width="1"/><rect x="-6" y="-6" width="9" height="5" fill="#cfcfcf" transform="rotate(-8)"/><rect x="-6" y="2" width="12" height="5" fill="#cfcfcf" transform="rotate(8)"/><circle cx="5.5" cy="-4" r="4.5" fill="#2680eb"/></g><g transform="translate(50.0 483.0)"><circle cx="-2" cy="-2" r="6" fill="none" stroke="#cfcfcf" stroke-width="1.5"/><line x1="2.5" y1="2.5" x2="8" y2="8" stroke="#cfcfcf" stroke-width="2" stroke-linecap="round"/></g>

<rect x="21.5" y="525" width="38" height="37" fill="#fff"/>
<rect x="32.5" y="535.5" width="16.5" height="15.5" fill="#474747"/>
<line x1="22" y1="561.5" x2="59" y2="525.5" stroke="#ff1a1a" stroke-width="2.2"/>
<rect x="2.5" y="506" width="37" height="36.5" fill="#000" stroke="#e0e0e0" stroke-width="1"/>
<path d="M52 510 C56 510 58 512 58 516" stroke="#d0d0d0" stroke-width="1.6" fill="none"/>
<path d="M49 510 L53 507 L53 513Z M58 519 L55 515 L61 515Z" fill="#d0d0d0"/>
<rect x="7.5" y="554" width="7" height="7" fill="#000" stroke="#ddd" stroke-width="1"/>
<rect x="4" y="550.5" width="7" height="7" fill="#fff" stroke="#333" stroke-width="1"/>
<rect x="3" y="571.5" width="17.5" height="19.5" fill="#3c3c3c"/>
<rect x="4.5" y="574" width="14" height="14" fill="#000" stroke="#555" stroke-width="0.5"/>
<rect x="26" y="574" width="14" height="14" fill="url(#tg2)" stroke="#111" stroke-width="1"/>
<rect x="48" y="574" width="14" height="14" fill="#fff" stroke="#111" stroke-width="1.2"/>
<line x1="48.5" y1="587.5" x2="61.5" y2="574.5" stroke="#ff1a1a" stroke-width="2"/>
<rect x="3" y="598" width="17.5" height="18" fill="#3a3a3a"/>
<circle cx="10" cy="605" r="4" fill="#8a8a8a" stroke="#cfcfcf" stroke-width="1"/><rect x="10" y="606" width="6" height="6" fill="#cfcfcf"/>
<circle cx="32" cy="605" r="4" fill="#8a8a8a" stroke="#cfcfcf" stroke-width="1"/><rect x="33" y="606" width="6" height="6" fill="#cfcfcf"/>
<circle cx="54" cy="606" r="4" fill="none" stroke="#6a6a6a" stroke-width="1.2"/>
<rect x="22" y="630" width="14" height="13" fill="#6a6a6a" stroke="#cfcfcf" stroke-width="1.2"/>
<rect x="30" y="626.5" width="15" height="11.5" fill="#7a7a7a" stroke="#cfcfcf" stroke-width="1.2"/>
<circle cx="27.8" cy="669.6" r="1.9" fill="#d0d0d0"/><circle cx="33.7" cy="669.6" r="1.9" fill="#d0d0d0"/><circle cx="39.5" cy="669.6" r="1.9" fill="#d0d0d0"/>

</svg>
<div class="a" style="left:1434px;top:104px;width:17px;height:977px;background:#4a4a4a"></div>
<div class="a" style="left:1451px;top:72px;width:3px;height:1009px;background:#3a3a3a"></div>
<div class="a" style="left:1454px;top:72px;width:46px;height:14px;background:#474747"></div>
<div class="a" style="left:1494px;top:86px;width:3px;height:995px;background:#3a3a3a"></div>
<div class="a" style="left:1497px;top:86px;width:3px;height:995px;background:#535353"></div>
<svg class="a" style="left:1430px;top:70px" width="70" height="700" viewBox="1430 70 70 700"><path d="M1482 76 L1479 79 L1482 82 M1486 76 L1483 79 L1486 82" stroke="#bdbdbd" stroke-width="1" fill="none"/><path d="M1438 118 L1442.5 113.5 L1447 118" stroke="#9a9a9a" stroke-width="1.2" fill="none"/><rect x="1454" y="161" width="40" height="2" fill="#434343"/><rect x="1454" y="266" width="40" height="2" fill="#434343"/><rect x="1454" y="370" width="40" height="2" fill="#434343"/><rect x="1454" y="447" width="40" height="2" fill="#434343"/><rect x="1454" y="550" width="40" height="2" fill="#434343"/><rect x="1454" y="747" width="40" height="2" fill="#434343"/><g fill="#3c3c3c"><rect x="1464" y="89.5" width="1" height="5"/><rect x="1466" y="89.5" width="1" height="5"/><rect x="1468" y="89.5" width="1" height="5"/><rect x="1470" y="89.5" width="1" height="5"/><rect x="1472" y="89.5" width="1" height="5"/><rect x="1474" y="89.5" width="1" height="5"/><rect x="1476" y="89.5" width="1" height="5"/><rect x="1478" y="89.5" width="1" height="5"/><rect x="1480" y="89.5" width="1" height="5"/><rect x="1482" y="89.5" width="1" height="5"/><rect x="1484" y="89.5" width="1" height="5"/></g><g fill="#3c3c3c"><rect x="1464" y="165.0" width="1" height="5"/><rect x="1466" y="165.0" width="1" height="5"/><rect x="1468" y="165.0" width="1" height="5"/><rect x="1470" y="165.0" width="1" height="5"/><rect x="1472" y="165.0" width="1" height="5"/><rect x="1474" y="165.0" width="1" height="5"/><rect x="1476" y="165.0" width="1" height="5"/><rect x="1478" y="165.0" width="1" height="5"/><rect x="1480" y="165.0" width="1" height="5"/><rect x="1482" y="165.0" width="1" height="5"/><rect x="1484" y="165.0" width="1" height="5"/></g><g fill="#3c3c3c"><rect x="1464" y="269.5" width="1" height="5"/><rect x="1466" y="269.5" width="1" height="5"/><rect x="1468" y="269.5" width="1" height="5"/><rect x="1470" y="269.5" width="1" height="5"/><rect x="1472" y="269.5" width="1" height="5"/><rect x="1474" y="269.5" width="1" height="5"/><rect x="1476" y="269.5" width="1" height="5"/><rect x="1478" y="269.5" width="1" height="5"/><rect x="1480" y="269.5" width="1" height="5"/><rect x="1482" y="269.5" width="1" height="5"/><rect x="1484" y="269.5" width="1" height="5"/></g><g fill="#3c3c3c"><rect x="1464" y="374.5" width="1" height="5"/><rect x="1466" y="374.5" width="1" height="5"/><rect x="1468" y="374.5" width="1" height="5"/><rect x="1470" y="374.5" width="1" height="5"/><rect x="1472" y="374.5" width="1" height="5"/><rect x="1474" y="374.5" width="1" height="5"/><rect x="1476" y="374.5" width="1" height="5"/><rect x="1478" y="374.5" width="1" height="5"/><rect x="1480" y="374.5" width="1" height="5"/><rect x="1482" y="374.5" width="1" height="5"/><rect x="1484" y="374.5" width="1" height="5"/></g><g fill="#3c3c3c"><rect x="1464" y="450.0" width="1" height="5"/><rect x="1466" y="450.0" width="1" height="5"/><rect x="1468" y="450.0" width="1" height="5"/><rect x="1470" y="450.0" width="1" height="5"/><rect x="1472" y="450.0" width="1" height="5"/><rect x="1474" y="450.0" width="1" height="5"/><rect x="1476" y="450.0" width="1" height="5"/><rect x="1478" y="450.0" width="1" height="5"/><rect x="1480" y="450.0" width="1" height="5"/><rect x="1482" y="450.0" width="1" height="5"/><rect x="1484" y="450.0" width="1" height="5"/></g><g fill="#3c3c3c"><rect x="1464" y="555.0" width="1" height="5"/><rect x="1466" y="555.0" width="1" height="5"/><rect x="1468" y="555.0" width="1" height="5"/><rect x="1470" y="555.0" width="1" height="5"/><rect x="1472" y="555.0" width="1" height="5"/><rect x="1474" y="555.0" width="1" height="5"/><rect x="1476" y="555.0" width="1" height="5"/><rect x="1478" y="555.0" width="1" height="5"/><rect x="1480" y="555.0" width="1" height="5"/><rect x="1482" y="555.0" width="1" height="5"/><rect x="1484" y="555.0" width="1" height="5"/></g><g transform="translate(1474.0 111.5)"><path d="M-9 2 C-10 -5 -2 -8 5 -7 C10 -6 10 -2 7 -1 C5 0 6 3 8 4 C6 8 -6 9 -9 2Z" fill="#cfcfcf"/><circle cx="-5" cy="3" r="1.6" fill="#535353"/><circle cx="-1" cy="5" r="1.6" fill="#535353"/><circle cx="3" cy="4.5" r="1.5" fill="#535353"/><circle cx="6" cy="-4" r="1.2" fill="#535353"/></g><defs><linearGradient id="cgg" x1="0" y1="0" x2="1" y2="1"><stop offset="0" stop-color="#111"/><stop offset="1" stop-color="#eee"/></linearGradient><linearGradient id="rgg"><stop offset="0" stop-color="#111"/><stop offset="1" stop-color="#eee"/></linearGradient></defs><g transform="translate(1474.0 141.5)"><path d="M-7 -8 C2 -8 8 -2 8 8 L-7 8Z" fill="url(#cgg)" stroke="#cfcfcf" stroke-width="1.2"/></g><g transform="translate(1474.0 186.0)"><rect x="-9" y="-6" width="18" height="12" fill="#cfcfcf"/><g fill="#535353"><rect x="-3.5" y="-6" width="1" height="12"/><rect x="2.5" y="-6" width="1" height="12"/><rect x="-9" y="-0.5" width="18" height="1"/></g><rect x="-2.5" y="0.5" width="5" height="5.5" fill="#8a8a8a"/></g><g transform="translate(1474.0 217.4)"><rect x="-5" y="1" width="10" height="8" fill="#cfcfcf"/><path d="M-4 1 L-7 -8 M0 1 L0 -9 M4 1 L8 -7" stroke="#cfcfcf" stroke-width="2" fill="none"/><circle cx="0" cy="-8" r="2" fill="#cfcfcf"/><path d="M6 -9 L10 -6 L7 -4Z" fill="#cfcfcf"/></g><g transform="translate(1474.0 247.0)"><circle cx="0" cy="-5" r="4.2" fill="#cfcfcf"/><circle cx="-4.5" cy="1" r="4.2" fill="#cfcfcf"/><circle cx="4.5" cy="1" r="4.2" fill="#cfcfcf"/><path d="M-1 1 L1 1 L2 8 L-2 8Z" fill="#cfcfcf"/><rect x="-4" y="7.5" width="8" height="1.5" fill="#cfcfcf"/></g><g transform="translate(1474.0 291.5)"><rect x="-9" y="-6" width="18" height="2.5" fill="#cfcfcf"/><rect x="-9" y="-1" width="18" height="2.5" fill="#cfcfcf"/><rect x="-9" y="4" width="18" height="2.5" fill="#cfcfcf"/></g><g transform="translate(1474.0 321.0)"><rect x="-8" y="-6.5" width="16" height="13" fill="url(#rgg)" stroke="#cfcfcf" stroke-width="1.2"/></g><g transform="translate(1474.0 352.6)"><circle cx="-2" cy="-2" r="6" fill="#cfcfcf"/><circle cx="2.5" cy="2.5" r="6" fill="#7a7a7a" stroke="#cfcfcf" stroke-width="1.2"/></g><g transform="translate(1474.0 395.0)"><circle cx="0" cy="0" r="6.5" fill="#cfcfcf"/><circle cx="0" cy="0" r="9" fill="none" stroke="#cfcfcf" stroke-width="1" stroke-dasharray="1.5 1.5"/></g><g transform="translate(1474.0 426.7)"><rect x="-4" y="-8" width="12" height="12" fill="none" stroke="#cfcfcf" stroke-width="1.3"/><rect x="-8" y="0" width="6" height="6" fill="none" stroke="#cfcfcf" stroke-width="1.3"/><rect x="-6" y="3" width="6" height="6" fill="none" stroke="#cfcfcf" stroke-width="1.3"/></g><rect x="1459.5" y="459" width="29" height="24" rx="2" fill="#353535"/><g transform="translate(1474.0 471.0)"><path d="M0 -8 L9 -3 L0 2 L-9 -3Z" fill="#cfcfcf"/><path d="M-9 2 L0 7 L9 2 L6 0.5 L0 4 L-6 0.5Z" fill="#cfcfcf"/></g><g transform="translate(1474.0 501.5)"><path d="M3 -8 L-8 -8 L-8 8 L8 8 L8 -2" fill="none" stroke="#cfcfcf" stroke-width="1.6"/><path d="M-1 1 L8 -8 M3 -8 H8 V-3" stroke="#cfcfcf" stroke-width="1.4" fill="none"/></g><g transform="translate(1474.0 531.0)"><rect x="-8" y="-9" width="10" height="12" fill="none" stroke="#cfcfcf" stroke-width="1.3"/><rect x="-4" y="-3" width="13" height="11" fill="#535353" stroke="#cfcfcf" stroke-width="1.3"/></g><g transform="translate(1474.0 576.0)"><rect x="-7" y="-7" width="14" height="14" fill="none" stroke="#cfcfcf" stroke-width="1.3" stroke-dasharray="2 2"/><g fill="#cfcfcf"><rect x="-9" y="-9" width="4" height="4"/><rect x="5" y="-9" width="4" height="4"/><rect x="-9" y="5" width="4" height="4"/><rect x="5" y="5" width="4" height="4"/><rect x="-1" y="-1" width="2" height="2"/></g></g><g transform="translate(1474.0 607.6)"><rect x="-9" y="-9" width="2" height="18" fill="#cfcfcf"/><rect x="-6" y="-5" width="10" height="4" fill="#cfcfcf"/><rect x="-6" y="2" width="15" height="4" fill="#cfcfcf"/></g><g transform="translate(1474.0 637.0)"><rect x="-8" y="-8" width="10" height="10" fill="#cfcfcf"/><rect x="-2" y="-2" width="10" height="10" fill="#cfcfcf"/><rect x="-2" y="-2" width="4" height="4" fill="#535353"/></g><text x="1466" y="674" font-family="Liberation Sans" font-size="19" fill="#cfcfcf">A</text><rect x="1482" y="657" width="1.5" height="17" fill="#cfcfcf"/><g transform="translate(1474.0 696.4)"><path d="M0 8 L0 -8 L6 -8 L6 8 M3 -8 L3 8" stroke="#cfcfcf" stroke-width="1.6" fill="none"/><path d="M1 -8 C-6 -8 -6 1 1 1Z" fill="#cfcfcf"/></g><text x="1465" y="736" font-family="Liberation Serif" font-style="italic" font-size="20" fill="#cfcfcf">O</text></svg>
<div class="a" style="left:1157px;top:442px;width:294px;height:639px;background:#535353"></div>
<div class="a" style="left:1157px;top:442px;width:294px;height:3px;background:#3a3a3a"></div>
<div class="a" style="left:1157px;top:445px;width:294px;height:30px;background:#474747"></div>
<div class="a" style="left:1157px;top:445px;width:56px;height:30px;background:#535353"></div>
<div class="a" style="left:1302px;top:447px;width:1px;height:26px;background:#404040"></div>
<div class="a" style="left:1379px;top:447px;width:1px;height:26px;background:#404040"></div>
<div class="a" style="left:1168px;top:453px;font-size:11.5px;font-weight:bold;color:#f0f0f0;white-space:nowrap">Layers</div>
<div class="a" style="left:1223px;top:453px;font-size:11.8px;font-weight:bold;color:#c8c8c8;white-space:nowrap">Asset Export</div>
<div class="a" style="left:1313px;top:453px;font-size:11.8px;font-weight:bold;color:#c8c8c8;white-space:nowrap">Artboards</div>
<div class="a" style="left:1163px;top:483px;width:282px;height:36px;background:#545454;border-top:1px solid #5a5a5a"></div>
<div class="a" style="left:1171px;top:487px;width:242px;height:24px;background:#474747;border-radius:2px;border:1px solid #4d4d4d"></div>
<div class="a" style="left:1200px;top:493px;font-size:10.5px;font-style:italic;color:#cfcfcf;white-space:nowrap">Search All</div>
<div class="a" style="left:1163px;top:520px;width:282px;height:561px;background:#535353;border-left:1px solid #5c5c5c;border-right:1px solid #5c5c5c;border-top:1px solid #5c5c5c"></div>
<svg class="a" style="left:1157px;top:442px" width="294" height="639" viewBox="1157 442 294 639"><rect x="1163" y="542.2" width="282" height="1" fill="#5c5c5c"/><path d="M1168 531.4 C1171 525.9 1178 525.9 1181.5 531.4 C1178 536.9 1171 536.9 1168 531.4 Z" fill="#d0d0d0"/><circle cx="1174.7" cy="531.4" r="2.6" fill="#535353"/><circle cx="1174.2" cy="530.9" r="1" fill="#d0d0d0"/><rect x="1210.7" y="521.5" width="3.8" height="19.8" fill="#0b6a1e"/><path d="M1223.5 526.9 L1227.5 531.4 L1223.5 535.9" stroke="#d0d0d0" stroke-width="1.3" fill="none"/><rect x="1242.4" y="522.1" width="19.5" height="18.5" rx="1.5" fill="#fff" stroke="#111" stroke-width="1.5"/><text x="1244.2" y="533.4" font-family="Liberation Sans" font-weight="bold" font-size="5.5" textLength="16" lengthAdjust="spacingAndGlyphs" fill="#111">ADEQUATE</text><circle cx="1417" cy="531.4" r="4.3" fill="none" stroke="#d6d6d6" stroke-width="1.2"/><rect x="1163" y="542.8" width="282" height="22.8" fill="#4c5f78"/><path d="M1437 543.8 L1444.5 543.8 L1444.5 550.8 Z" fill="#e8e8e8"/><rect x="1163" y="565.0" width="282" height="1" fill="#5c5c5c"/><rect x="1210.7" y="544.2" width="3.8" height="19.8" fill="#f26510"/><path d="M1223 552.1 L1227.5 556.6 L1232 552.1" stroke="#d0d0d0" stroke-width="1.3" fill="none"/><rect x="1242.4" y="544.9" width="19.5" height="18.5" rx="1.5" fill="#fff" stroke="#111" stroke-width="1.5"/><text x="1244.2" y="556.1" font-family="Liberation Sans" font-weight="bold" font-size="5.5" textLength="16" lengthAdjust="spacingAndGlyphs" fill="#111">REGULAR</text><circle cx="1417" cy="554.1" r="4.3" fill="none" stroke="#d6d6d6" stroke-width="1.2"/><rect x="1163" y="587.8" width="282" height="1" fill="#5c5c5c"/><path d="M1168 576.9 C1171 571.4 1178 571.4 1181.5 576.9 C1178 582.4 1171 582.4 1168 576.9 Z" fill="#7a7a7a"/><circle cx="1174.7" cy="576.9" r="2.6" fill="#535353"/><circle cx="1174.2" cy="576.4" r="1" fill="#7a7a7a"/><rect x="1210.7" y="567.0" width="3.8" height="19.8" fill="#f26510"/><rect x="1267.4" y="567.6" width="19.5" height="18.5" rx="1.5" fill="#fff" stroke="#111" stroke-width="1.5"/><text x="1269.2" y="578.9" font-family="Liberation Sans" font-weight="bold" font-size="5.5" textLength="16" lengthAdjust="spacingAndGlyphs" fill="#111">REGULAR</text><circle cx="1417" cy="576.9" r="4.3" fill="none" stroke="#d6d6d6" stroke-width="1.2"/><rect x="1163" y="610.5" width="282" height="1" fill="#5c5c5c"/><path d="M1168 599.6 C1171 594.1 1178 594.1 1181.5 599.6 C1178 605.1 1171 605.1 1168 599.6 Z" fill="#d0d0d0"/><circle cx="1174.7" cy="599.6" r="2.6" fill="#535353"/><circle cx="1174.2" cy="599.1" r="1" fill="#d0d0d0"/><rect x="1210.7" y="589.8" width="3.8" height="19.8" fill="#f26510"/><path d="M1223 597.6 L1227.5 602.1 L1232 597.6" stroke="#d0d0d0" stroke-width="1.3" fill="none"/><rect x="1242.4" y="590.4" width="19.5" height="18.5" rx="1.5" fill="#fff" stroke="#111" stroke-width="1.5"/><text x="1244.2" y="602.6" font-family="Liberation Sans" font-weight="bold" font-size="8" textLength="16" lengthAdjust="spacingAndGlyphs" fill="#111">FIXED</text><circle cx="1417" cy="599.6" r="4.3" fill="none" stroke="#d6d6d6" stroke-width="1.2"/><rect x="1163" y="633.2" width="282" height="1" fill="#5c5c5c"/><path d="M1168 622.4 C1171 616.9 1178 616.9 1181.5 622.4 C1178 627.9 1171 627.9 1168 622.4 Z" fill="#d0d0d0"/><circle cx="1174.7" cy="622.4" r="2.6" fill="#535353"/><circle cx="1174.2" cy="621.9" r="1" fill="#d0d0d0"/><rect x="1210.7" y="612.5" width="3.8" height="19.8" fill="#f26510"/><rect x="1267.4" y="613.1" width="19.5" height="18.5" rx="1.5" fill="#fff" stroke="#111" stroke-width="1.5"/><text x="1269.2" y="625.4" font-family="Liberation Sans" font-weight="bold" font-size="8" textLength="16" lengthAdjust="spacingAndGlyphs" fill="#111">FIXED</text><circle cx="1417" cy="622.4" r="4.3" fill="none" stroke="#d6d6d6" stroke-width="1.2"/><rect x="1163" y="656.0" width="282" height="1" fill="#5c5c5c"/><path d="M1168 645.1 C1171 639.6 1178 639.6 1181.5 645.1 C1178 650.6 1171 650.6 1168 645.1 Z" fill="#d0d0d0"/><circle cx="1174.7" cy="645.1" r="2.6" fill="#535353"/><circle cx="1174.2" cy="644.6" r="1" fill="#d0d0d0"/><rect x="1210.7" y="635.2" width="3.8" height="19.8" fill="#8a8a8a"/><path d="M1223.5 640.6 L1227.5 645.1 L1223.5 649.6" stroke="#d0d0d0" stroke-width="1.3" fill="none"/><rect x="1242.4" y="635.9" width="19.5" height="18.5" rx="1.5" fill="#fff" stroke="#111" stroke-width="1.5"/><rect x="1243.6" y="645.1" width="17" height="1" fill="#333"/><rect x="1247.6" y="644.1" width="9" height="2" fill="#555"/><circle cx="1417" cy="645.1" r="4.3" fill="none" stroke="#d6d6d6" stroke-width="1.2"/><rect x="1163" y="678.8" width="282" height="1" fill="#5c5c5c"/><path d="M1168 667.9 C1171 662.4 1178 662.4 1181.5 667.9 C1178 673.4 1171 673.4 1168 667.9 Z" fill="#d0d0d0"/><circle cx="1174.7" cy="667.9" r="2.6" fill="#535353"/><circle cx="1174.2" cy="667.4" r="1" fill="#d0d0d0"/><rect x="1210.7" y="658.0" width="3.8" height="19.8" fill="#f5ef3a"/><path d="M1223.5 663.4 L1227.5 667.9 L1223.5 672.4" stroke="#d0d0d0" stroke-width="1.3" fill="none"/><rect x="1242.4" y="658.6" width="19.5" height="18.5" rx="1.5" fill="#fff" stroke="#111" stroke-width="1.5"/><rect x="1243.6" y="667.9" width="17" height="1" fill="#333"/><circle cx="1417" cy="667.9" r="4.3" fill="none" stroke="#d6d6d6" stroke-width="1.2"/><rect x="1163" y="701.5" width="282" height="1" fill="#5c5c5c"/><path d="M1168 690.6 C1171 685.1 1178 685.1 1181.5 690.6 C1178 696.1 1171 696.1 1168 690.6 Z" fill="#d0d0d0"/><circle cx="1174.7" cy="690.6" r="2.6" fill="#535353"/><circle cx="1174.2" cy="690.1" r="1" fill="#d0d0d0"/><rect x="1210.7" y="680.8" width="3.8" height="19.8" fill="#3de6f2"/><path d="M1223.5 686.1 L1227.5 690.6 L1223.5 695.1" stroke="#d0d0d0" stroke-width="1.3" fill="none"/><rect x="1242.4" y="681.4" width="19.5" height="18.5" rx="1.5" fill="#fff" stroke="#111" stroke-width="1.5"/><rect x="1243.6" y="690.6" width="17" height="1" fill="#333"/><circle cx="1417" cy="690.6" r="4.3" fill="none" stroke="#d6d6d6" stroke-width="1.2"/><rect x="1163" y="724.2" width="282" height="1" fill="#5c5c5c"/><path d="M1168 713.4 C1171 707.9 1178 707.9 1181.5 713.4 C1178 718.9 1171 718.9 1168 713.4 Z" fill="#d0d0d0"/><circle cx="1174.7" cy="713.4" r="2.6" fill="#535353"/><circle cx="1174.2" cy="712.9" r="1" fill="#d0d0d0"/><rect x="1210.7" y="703.5" width="3.8" height="19.8" fill="#e94ee6"/><path d="M1223.5 708.9 L1227.5 713.4 L1223.5 717.9" stroke="#d0d0d0" stroke-width="1.3" fill="none"/><rect x="1242.4" y="704.1" width="19.5" height="18.5" rx="1.5" fill="#fff" stroke="#111" stroke-width="1.5"/><ellipse cx="1252.2" cy="713.4" rx="7" ry="4" fill="#ddd"/><circle cx="1417" cy="713.4" r="4.3" fill="none" stroke="#d6d6d6" stroke-width="1.2"/><rect x="1163" y="747.0" width="282" height="1" fill="#5c5c5c"/><path d="M1168 736.1 C1171 730.6 1178 730.6 1181.5 736.1 C1178 741.6 1171 741.6 1168 736.1 Z" fill="#d0d0d0"/><circle cx="1174.7" cy="736.1" r="2.6" fill="#535353"/><circle cx="1174.2" cy="735.6" r="1" fill="#d0d0d0"/><rect x="1210.7" y="726.2" width="3.8" height="19.8" fill="#4a52f0"/><path d="M1223.5 731.6 L1227.5 736.1 L1223.5 740.6" stroke="#d0d0d0" stroke-width="1.3" fill="none"/><rect x="1242.4" y="726.9" width="19.5" height="18.5" rx="1.5" fill="#fff" stroke="#111" stroke-width="1.5"/><ellipse cx="1252.2" cy="736.1" rx="7" ry="4" fill="#ddd"/><circle cx="1417" cy="736.1" r="4.3" fill="none" stroke="#d6d6d6" stroke-width="1.2"/><rect x="1163" y="769.8" width="282" height="1" fill="#5c5c5c"/><path d="M1168 758.9 C1171 753.4 1178 753.4 1181.5 758.9 C1178 764.4 1171 764.4 1168 758.9 Z" fill="#d0d0d0"/><circle cx="1174.7" cy="758.9" r="2.6" fill="#535353"/><circle cx="1174.2" cy="758.4" r="1" fill="#d0d0d0"/><rect x="1193" y="757.4" width="9" height="7" rx="1" fill="#d0d0d0"/><path d="M1195 757.4 V754.9 C1195 751.4 1200 751.4 1200 754.9 V757.4" stroke="#d0d0d0" stroke-width="1.3" fill="none"/><rect x="1210.7" y="749.0" width="3.8" height="19.8" fill="#f26510"/><path d="M1223.5 754.4 L1227.5 758.9 L1223.5 763.4" stroke="#d0d0d0" stroke-width="1.3" fill="none"/><rect x="1242.4" y="749.6" width="19.5" height="18.5" rx="1.5" fill="#fff" stroke="#111" stroke-width="1.5"/><rect x="1249.6" y="756.9" width="5" height="6" fill="#7a3b95"/><rect x="1249.6" y="761.9" width="5" height="7" fill="#f7a12a"/><circle cx="1252.1" cy="753.9" r="2.5" fill="#6b5143"/><circle cx="1417" cy="758.9" r="4.3" fill="none" stroke="#d6d6d6" stroke-width="1.2"/><rect x="1163" y="792.5" width="282" height="1" fill="#5c5c5c"/><path d="M1168 781.6 C1171 776.1 1178 776.1 1181.5 781.6 C1178 787.1 1171 787.1 1168 781.6 Z" fill="#d0d0d0"/><circle cx="1174.7" cy="781.6" r="2.6" fill="#535353"/><circle cx="1174.2" cy="781.1" r="1" fill="#d0d0d0"/><rect x="1210.7" y="771.8" width="3.8" height="19.8" fill="#f26510"/><path d="M1223.5 777.1 L1227.5 781.6 L1223.5 786.1" stroke="#d0d0d0" stroke-width="1.3" fill="none"/><rect x="1242.4" y="772.4" width="19.5" height="18.5" rx="1.5" fill="#fff" stroke="#111" stroke-width="1.5"/><rect x="1249.1" y="779.6" width="6" height="5" fill="#1aa653"/><rect x="1250.1" y="784.6" width="4" height="7" fill="#7f5232"/><circle cx="1252.1" cy="776.6" r="2.8" fill="#f0b9aa"/><circle cx="1417" cy="781.6" r="4.3" fill="none" stroke="#d6d6d6" stroke-width="1.2"/><rect x="1163" y="815.2" width="282" height="1" fill="#5c5c5c"/><path d="M1168 804.4 C1171 798.9 1178 798.9 1181.5 804.4 C1178 809.9 1171 809.9 1168 804.4 Z" fill="#d0d0d0"/><circle cx="1174.7" cy="804.4" r="2.6" fill="#535353"/><circle cx="1174.2" cy="803.9" r="1" fill="#d0d0d0"/><rect x="1193" y="802.9" width="9" height="7" rx="1" fill="#d0d0d0"/><path d="M1195 802.9 V800.4 C1195 796.9 1200 796.9 1200 800.4 V802.9" stroke="#d0d0d0" stroke-width="1.3" fill="none"/><rect x="1210.7" y="794.5" width="3.8" height="19.8" fill="#f26510"/><path d="M1223.5 799.9 L1227.5 804.4 L1223.5 808.9" stroke="#d0d0d0" stroke-width="1.3" fill="none"/><rect x="1242.4" y="795.1" width="19.5" height="18.5" rx="1.5" fill="#fff" stroke="#111" stroke-width="1.5"/><rect x="1243.6" y="798.9" width="17" height="11" fill="#efb52c"/><circle cx="1417" cy="804.4" r="4.3" fill="none" stroke="#d6d6d6" stroke-width="1.2"/><rect x="1186.5" y="520" width="1" height="297" fill="#5c5c5c"/><rect x="1405" y="520" width="1" height="297" fill="#5c5c5c"/><path d="M1407 455 L1411 459 L1407 463 M1412 455 L1416 459 L1412 463" stroke="#cfcfcf" stroke-width="1.1" fill="none"/><rect x="1424.5" y="454" width="1.2" height="12" fill="#bdbdbd"/><g fill="#cfcfcf"><rect x="1433" y="455" width="11" height="1.4"/><rect x="1433" y="459" width="11" height="1.4"/><rect x="1433" y="463" width="11" height="1.4"/></g><circle cx="1182" cy="497" r="4.5" fill="none" stroke="#d0d0d0" stroke-width="1.3"/><line x1="1185.3" y1="500.3" x2="1189" y2="504" stroke="#d0d0d0" stroke-width="1.5"/><path d="M1424 491 L1438.7 491 L1433 498 L1433 506.6 L1429.7 503.5 L1429.7 498 Z" fill="#cfcfcf"/></svg>
<div class="a" style="left:1267.5px;top:525.4px;font-size:12px;color:#dcdcdc;white-space:nowrap">6</div>
<div class="a" style="left:1267.5px;top:548.1px;font-size:12px;color:#e6e6e6;white-space:nowrap">5</div>
<div class="a" style="left:1292.3px;top:570.9px;font-size:12px;color:#dcdcdc;white-space:nowrap">regular</div>
<div class="a" style="left:1267.5px;top:593.6px;font-size:12px;color:#dcdcdc;white-space:nowrap">4</div>
<div class="a" style="left:1292.3px;top:616.4px;font-size:12px;color:#dcdcdc;white-space:nowrap">fixed</div>
<div class="a" style="left:1267.5px;top:639.1px;font-size:12px;color:#dcdcdc;white-space:nowrap">3</div>
<div class="a" style="left:1267.5px;top:661.9px;font-size:12px;color:#dcdcdc;white-space:nowrap">2</div>
<div class="a" style="left:1267.5px;top:684.6px;font-size:12px;color:#dcdcdc;white-space:nowrap">1.</div>
<div class="a" style="left:1267.5px;top:707.4px;font-size:12px;color:#dcdcdc;white-space:nowrap">Layer 5</div>
<div class="a" style="left:1267.5px;top:730.1px;font-size:12px;color:#dcdcdc;white-space:nowrap">Layer 4</div>
<div class="a" style="left:1267.5px;top:752.9px;font-size:12px;color:#dcdcdc;white-space:nowrap">female</div>
<div class="a" style="left:1267.5px;top:775.6px;font-size:12px;color:#dcdcdc;white-space:nowrap">male</div>
<div class="a" style="left:1267.5px;top:798.4px;font-size:12px;color:#dcdcdc;white-space:nowrap">background</div>

</body></html>
